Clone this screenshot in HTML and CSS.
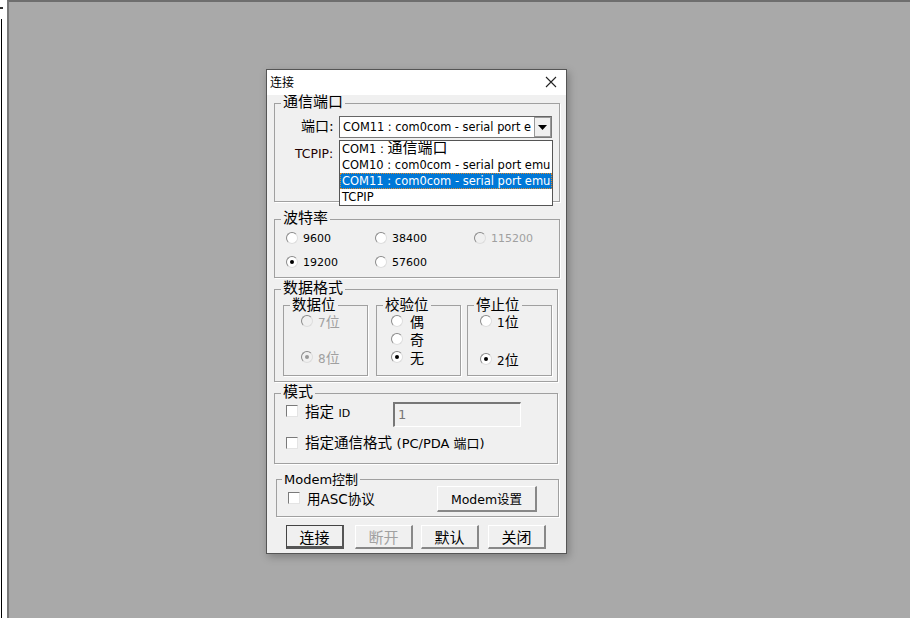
FILE: index.html
```html
<!DOCTYPE html>
<html lang="zh">
<head>
<meta charset="utf-8">
<title>连接</title>
<link rel="stylesheet" href="styles.css">
</head>
<body>
<div class="sidebar"><i class="tick"></i><i class="rule"></i></div>
<main class="workspace">
  <section class="dialog">
    <header class="titlebar">
      <span>连接</span>
      <svg class="close" width="12" height="12" viewBox="0 0 12 12"><path d="M1 1L11 11M11 1L1 11" stroke="#222" stroke-width="1.1" fill="none"/></svg>
    </header>
    <div class="client">
      <div class="group port">
        <div class="gt">通信端口</div>
        <div class="port-row"><label>端口:</label>
          <div class="combo"><span class="combo-text">COM11 : com0com - serial port e</span><span class="combo-btn"><svg width="9" height="5" viewBox="0 0 9 5"><path d="M0 0H9L4.5 5Z" fill="#000"/></svg></span></div>
        </div>
        <div class="tcp-row"><label>TCPIP:</label></div>
        <ul class="list">
          <li>COM1 : <span class="cjk">通信端口</span></li>
          <li>COM10 : com0com - serial port emu</li>
          <li class="sel">COM11 : com0com - serial port emu</li>
          <li>TCPIP</li>
        </ul>
      </div>
      <div class="group baud">
        <div class="gt">波特率</div>
        <div class="baud-grid">
          <div class="opt"><i class="radio"></i>9600</div>
          <div class="opt"><i class="radio"></i>38400</div>
          <div class="opt off"><i class="radio"></i>115200</div>
          <div class="opt"><i class="radio on"></i>19200</div>
          <div class="opt"><i class="radio"></i>57600</div>
        </div>
      </div>
      <div class="group fmt">
        <div class="gt">数据格式</div>
        <div class="fmt-row">
          <div class="group sub s1">
            <div class="gt">数据位</div>
            <div class="col two"><div class="opt off"><i class="radio"></i><span><span class="digit">7</span>位</span></div><div class="opt off"><i class="radio on"></i><span><span class="digit">8</span>位</span></div></div>
          </div>
          <div class="group sub s2">
            <div class="gt">校验位</div>
            <div class="col three"><div class="opt"><i class="radio"></i>偶</div><div class="opt"><i class="radio"></i>奇</div><div class="opt"><i class="radio on"></i>无</div></div>
          </div>
          <div class="group sub s3">
            <div class="gt">停止位</div>
            <div class="col two"><div class="opt"><i class="radio"></i><span><span class="digit">1</span>位</span></div><div class="opt"><i class="radio on"></i><span><span class="digit">2</span>位</span></div></div>
          </div>
        </div>
      </div>
      <div class="group mode">
        <div class="gt">模式</div>
        <div class="mode-row"><div class="opt"><i class="check"></i><span>指定 <span class="id">ID</span></span></div><div class="input">1</div></div>
        <div class="opt fmt-check"><i class="check"></i><span>指定通信格式 <span class="small">(PC/PDA 端口)</span></span></div>
      </div>
      <div class="group modem">
        <div class="gt">Modem控制</div>
        <div class="modem-row"><div class="opt"><i class="check"></i>用ASC协议</div><button class="btn wide">Modem设置</button></div>
      </div>
      <div class="actions">
        <button class="btn default">连接</button>
        <button class="btn dis">断开</button>
        <button class="btn">默认</button>
        <button class="btn">关闭</button>
      </div>
    </div>
  </section>
</main>
</body>
</html>
```

FILE: styles.css
```css
* { box-sizing: border-box; }
html, body { margin: 0; height: 100%; overflow: hidden; }
body {
  display: flex;
  width: 910px;
  height: 618px;
  background: #fff;
  font-family: "DejaVu Sans", "Noto Sans CJK SC", sans-serif;
  font-size: 11.4px;
  color: #000;
}
.sidebar { position: relative; width: 7px; background: #fff; }
.tick { position: absolute; left: 0; top: 7px; width: 3px; height: 2px; background: #333; }
.rule { position: absolute; left: 1px; top: 19px; width: 1px; height: 599px; background: #000; }
.workspace {
  position: relative;
  flex: 1;
  background: #a9a9a9;
  border-left: 2px solid #787878;
  border-top: 2px solid #6e6e6e;
}
.dialog {
  position: absolute;
  left: 257px;
  top: 67px;
  width: 301px;
  height: 485px;
  border: 1px solid #555;
  background: #f0f0f0;
  box-shadow: 2px 3px 8px rgba(0,0,0,.25);
}
.titlebar {
  height: 25px;
  background: #fff;
  display: flex;
  align-items: center;
  justify-content: space-between;
  padding: 0 9px 2px 3px;
  font-size: 12px;
}
.client { padding: 8px 0 0 7px; }
.group { position: relative; border: 1px solid #a0a0a0; width: 286px; box-shadow: 1px 1px 0 #fff; }
.gt {
  width: fit-content;
  margin: -9px 0 0 6px;
  padding: 0 2px;
  height: 15px;
  line-height: 15px;
  background: #f0f0f0;
  font-size: 15px;
  white-space: nowrap;
}
.port { height: 99px; }
.port-row { display: flex; align-items: flex-start; padding: 6px 0 0 26px; }
.port-row label { font-size: 14px; width: 38px; line-height: 20px; }
.combo {
  display: flex;
  width: 213px;
  height: 22px;
  background: #fff;
  border: 1px solid #7a7a7a;
  border-left-color: #666; border-top-color: #666;
}
.combo-text { flex: 1; overflow: hidden; white-space: nowrap; padding: 3px 0 0 3px; }
.combo-btn {
  width: 17px;
  background: #f0f0f0;
  border: 1px solid #999;
  display: flex; align-items: center; justify-content: center;
}
.tcp-row { padding: 8px 0 0 20px; color: #200; font-size: 12.4px; }
.list {
  position: absolute;
  left: 64px; top: 36px;
  width: 214px; height: 66px;
  margin: 0; padding: 0;
  list-style: none;
  background: #fff;
  border: 1px solid #555;
  z-index: 2;
  overflow: hidden;
  font-size: 11.5px;
}
.list li { height: 16px; line-height: 16px; padding-left: 2px; white-space: nowrap; }
.list li:first-child { line-height: 15px; }
.list li.sel { background: #0078d7; color: #fff; outline: 1px dotted #e08a2c; outline-offset: -1px; }
.cjk { font-size: 15px; }
.baud { height: 59px; margin-top: 17px; }
.baud-grid { display: grid; grid-template-columns: 89px 99px 1fr; grid-auto-rows: 24px; padding: 0 0 0 11px; height: 44px; font-size: 11px; }
.opt { display: flex; align-items: center; gap: 5px; white-space: nowrap; }
.off { color: #a0a0a0; }
.radio {
  display: inline-block; position: relative; width: 12px; height: 12px;
  border-radius: 50%;
  background: #fff;
  border: 1px solid #8a8a8a;
  border-right-color: #ddd; border-bottom-color: #ddd;
  flex: none;
}
.radio.on::after {
  content: ""; position: absolute; left: 3px; top: 3px; width: 4px; height: 4px; border-radius: 50%; background: #000;
}
.off .radio { background: #f0f0f0; }
.off .radio.on::after { background: #999; }
.fmt { height: 93px; margin-top: 11px; width: 284px; }
.fmt-row { display: flex; padding: 9px 0 0 8px; }
.sub { height: 71px; width: 85px; }
.sub .gt { margin-top: -8px; font-size: 14.5px; }
.s1 { margin-right: 8px; }
.s3 { margin-left: 6px; }
.col { display: flex; flex-direction: column; padding: 0 0 0 14px; margin-top: -1px; }
.s1 .col { padding-left: 17px; }
.s3 .col { padding-left: 12px; }
.three .opt, .two .opt { height: 18px; font-size: 14px; }
.three .opt { gap: 7px; }
.digit { font-size: 12px; }
.s1 .opt + .opt { margin-top: 18px; }
.s3 .opt + .opt { margin-top: 20px; }
.mode { height: 71px; margin-top: 11px; width: 284px; }
.mode-row { display: flex; align-items: flex-start; padding-left: 11px; }
.mode-row .opt { width: 107px; height: 22px; margin-top: -1px; }
.mode .opt { font-size: 14.5px; gap: 7px; }
.mode .check { margin-top: 2px; }
.small { font-size: 13px; }
.id { font-size: 11px; }
.check {
  display: inline-block; width: 12px; height: 12px; background: #fff;
  border: 1px solid #7a7a7a; border-right-color: #e4e4e4; border-bottom-color: #e4e4e4; flex: none;
}
.input {
  width: 128px; height: 25px; margin-top: 2px;
  background: #f0f0f0;
  border: 1px solid #fff;
  border-left: 2px solid #777; border-top: 2px solid #777;
  color: #777; padding: 3px 0 0 3px; font-size: 13px;
}
.fmt-check { margin: 4px 0 0 11px; }
.modem { height: 38px; margin: 15px 0 0 2px; width: 283px; }
.modem .gt { margin: -8px 0 0 5px; font-size: 13px; }
.modem-row { display: flex; align-items: flex-start; justify-content: space-between; padding: 0 21px 0 11px; height: 26px; margin-top: -1px; }
.modem-row .opt { font-size: 13.5px; height: 22px; margin-top: 1px; gap: 7px; }
.btn {
  font: inherit; font-size: 13.5px;
  height: 24px;
  background: #f0f0f0;
  border: 1px solid #fff;
  border-right: 2px solid #888; border-bottom: 2px solid #888;
  padding: 0;
  color: #000;
}
.wide { width: 100px; height: 26px; font-size: 12.5px; }
.actions { display: flex; padding: 8px 0 0 12px; }
.actions .btn { width: 58px; font-size: 15px; padding-bottom: 3px; }
.actions .btn + .btn { margin-left: 11px; }
.actions .btn:nth-child(3) { margin-left: 8px; }
.actions .btn:nth-child(4) { margin-left: 9px; }
.default { border: 1px solid #444; border-right: 2px solid #555; border-bottom: 3px solid #555; }
.dis { color: #a0a0a0; }
```
